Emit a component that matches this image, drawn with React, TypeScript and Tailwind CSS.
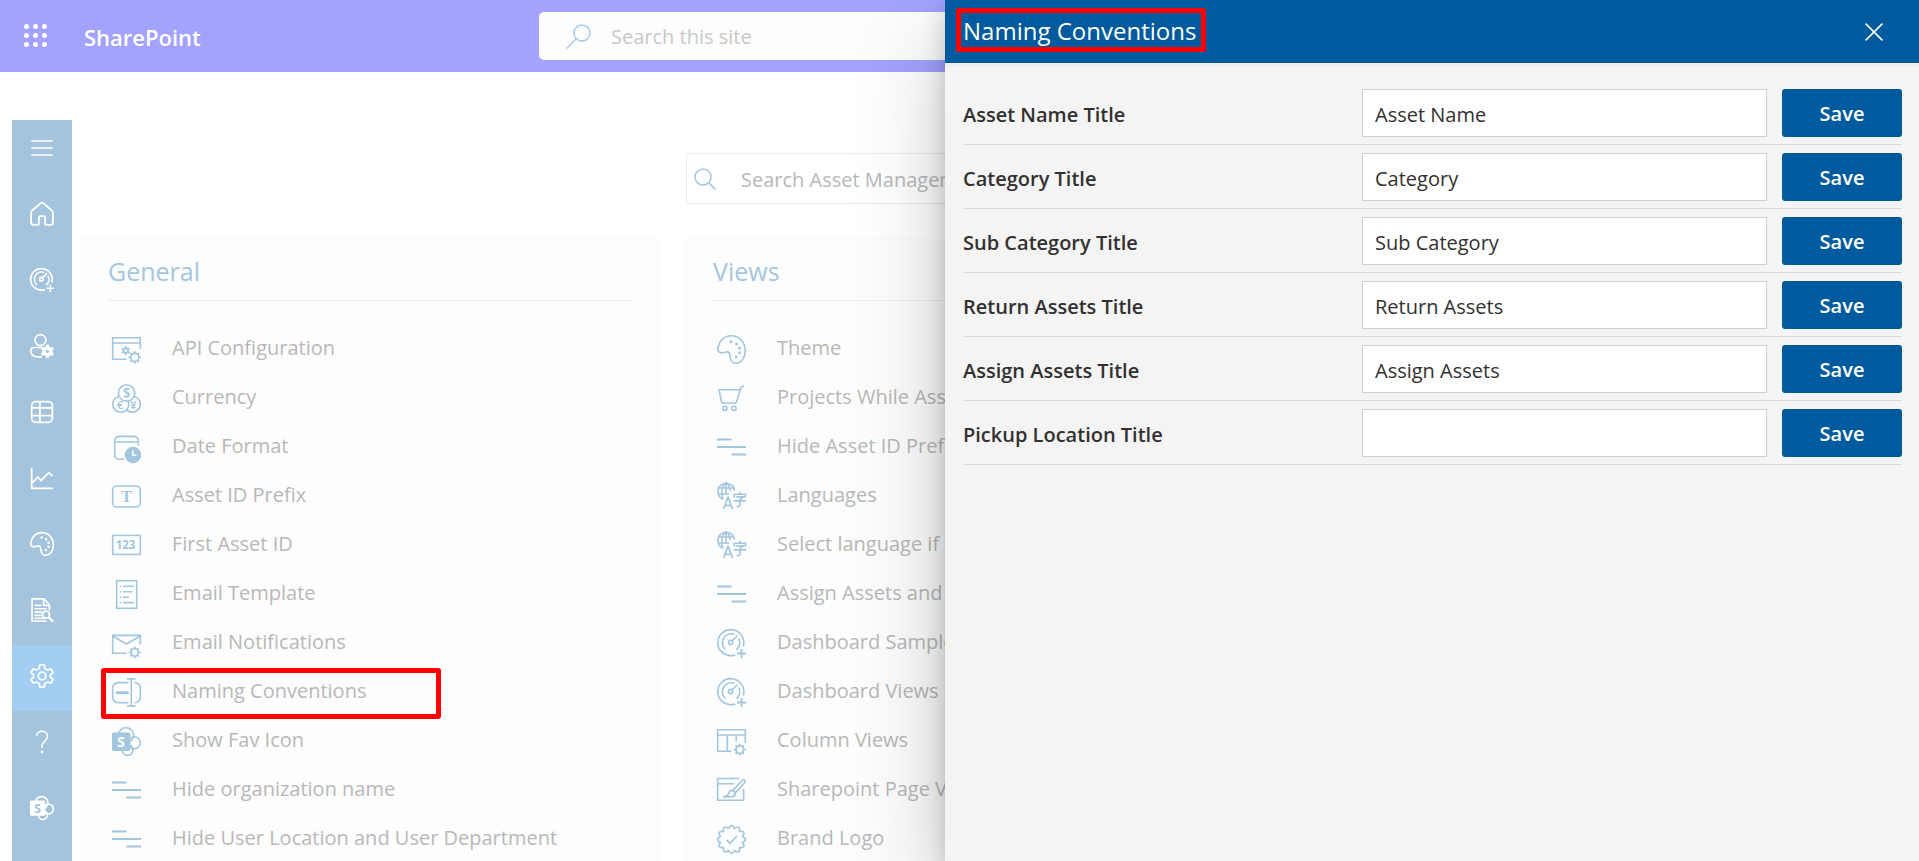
import React from "react";

type IconProps = { className?: string };

function Svg({ className = "", children }: { className?: string; children: React.ReactNode }) {
  return (
    <svg
      viewBox="0 0 29 29"
      fill="none"
      stroke="currentColor"
      strokeWidth="1.6"
      className={`shrink-0 overflow-visible ${className}`}
      aria-hidden="true"
    >
      {children}
    </svg>
  );
}

function Gear({ x, y, r, teeth = 8 }: { x: number; y: number; r: number; teeth?: number }) {
  return (
    <g transform={`translate(${x} ${y})`}>
      <circle r={r} />
      {Array.from({ length: teeth }, (_, i) => (
        <path key={i} d={`M0 ${-r}V${-r - 2.2}`} strokeWidth="1.9" transform={`rotate(${(360 / teeth) * i})`} />
      ))}
    </g>
  );
}

const ApiIcon = ({ className }: IconProps) => (
  <Svg className={className}>
    <path d="M14.5 24.3H.7V2.7H28.3V14M.7 8H28.3" />
    <Gear x={13.7} y={15.7} r={2.2} teeth={6} />
    <Gear x={22.7} y={22.4} r={4} />
  </Svg>
);

const CurrencyIcon = ({ className }: IconProps) => (
  <Svg className={className}>
    <circle cx="20.2" cy="20.2" r="8.1" fill="#fdfdfd" />
    <circle cx="8.8" cy="20.2" r="8.1" fill="#fdfdfd" />
    <circle cx="14.6" cy="8.9" r="8.2" fill="#fdfdfd" />
    <g fill="currentColor" stroke="none" fontFamily="Open Sans, sans-serif" fontWeight="600" textAnchor="middle">
      <text x="14.6" y="13.8" fontSize="13.5">$</text>
      <text x="8" y="24.6" fontSize="11.5">€</text>
      <text x="21.2" y="24.6" fontSize="11.5">¥</text>
    </g>
  </Svg>
);

const DateIcon = ({ className }: IconProps) => (
  <Svg className={className}>
    <path d="M12 26.3H7A4.3 4.3 0 0 1 2.7 22V7.7A4.3 4.3 0 0 1 7 3.4H22A4.3 4.3 0 0 1 26.3 7.7V12.5M2.7 9H26.3" />
    <circle cx="21" cy="22" r="8.2" fill="currentColor" stroke="none" />
    <path d="M20.8 17.5V22.3H24.5" stroke="#fdfdfd" strokeWidth="1.6" />
  </Svg>
);

const PrefixIcon = ({ className }: IconProps) => (
  <Svg className={className}>
    <rect x=".7" y="4" width="27.6" height="21" rx="4" />
    <text x="14.5" y="20.2" fontSize="16" fontWeight="700" fontFamily="Liberation Serif, serif" textAnchor="middle" fill="currentColor" stroke="none">T</text>
  </Svg>
);

const NumberIcon = ({ className }: IconProps) => (
  <Svg className={className}>
    <rect x=".7" y="4.4" width="27.6" height="19" />
    <text x="13.6" y="18.2" fontSize="11.5" fontWeight="700" fontFamily="Open Sans, sans-serif" textAnchor="middle" fill="currentColor" stroke="none">123</text>
  </Svg>
);

const TemplateIcon = ({ className }: IconProps) => (
  <Svg className={className}>
    <rect x="4.7" y=".7" width="20" height="27.6" />
    <path d="M7.8 6.3H9.2M11 6.3H22M7.8 11.8H9.2M11 11.8H20.3M7.8 17.2H9.2M11 17.2H17M7.8 22.6H9.2M11 22.6H22" />
  </Svg>
);

const MailIcon = ({ className }: IconProps) => (
  <Svg className={className}>
    <path d="M14.6 24.3H.7V6.4H28.3V15.5M.7 7L14.5 15L28.3 7" />
    <Gear x={22.7} y={23.4} r={3.6} />
  </Svg>
);

const RenameIcon = ({ className }: IconProps) => (
  <Svg className={className}>
    <path d="M16.5 4.6H6A5.3 5.3 0 0 0 .7 9.9V19.4A5.3 5.3 0 0 0 6 24.7H16.5M22.5 4.6A5.5 5.5 0 0 1 28.3 10V19.3A5.5 5.5 0 0 1 22.5 24.7" />
    <path d="M19.3 .9V28.1M15 .9H23.5M15 28.1H23.5" />
    <path d="M5 14.7H15.5" strokeWidth="3" strokeLinecap="round" />
  </Svg>
);

const SiteIcon = ({ className, ink }: IconProps & { ink: string }) => (
  <Svg className={className}>
    <circle cx="14" cy="8.3" r="7.6" />
    <circle cx="22.3" cy="15.8" r="6" />
    <circle cx="15.5" cy="23" r="5.4" />
    <rect x="0" y="5.5" width="18.3" height="18.5" rx="1.5" fill="currentColor" stroke="none" />
    <text x="9.1" y="20" fontSize="14.5" fontWeight="700" fontFamily="Open Sans, sans-serif" textAnchor="middle" fill={ink} stroke="none">S</text>
  </Svg>
);

const FavIcon = ({ className }: IconProps) => <SiteIcon className={className} ink="#fdfdfd" />;

const LinesIcon = ({ className }: IconProps) => (
  <Svg className={className}>
    <path d="M0 6.5H14.5M0 14H29M14.5 21.5H29" strokeWidth="1.8" />
  </Svg>
);

const PaletteIcon = ({ className }: IconProps) => (
  <Svg className={className}>
    <path d="M.8 14.2C1.6 6.2 7 .8 14.2 .8C22 .8 28.2 7 28.2 15.6C28.2 23.4 24 28.2 19.2 28.2C15.2 28.2 13.2 24.6 13.1 20.9C13 17.8 11.3 16.1 8.7 16.9C6.6 17.6 5.6 18.2 3.7 17.7C1.6 17.1 .6 15.8 .8 14.2Z" />
    <g fill="currentColor" stroke="none">
      <circle cx="14" cy="6.7" r="1.5" />
      <circle cx="19.4" cy="8.9" r="1.5" />
      <circle cx="22.5" cy="12.9" r="1.5" />
      <circle cx="22.5" cy="17.7" r="1.5" />
      <circle cx="19.1" cy="21.8" r="1.5" />
    </g>
  </Svg>
);

const CartIcon = ({ className }: IconProps) => (
  <Svg className={className}>
    <path d="M27 2.2H25.5Q24.4 2.2 24 3.6L19.6 17.8Q19.2 19 18 19H6Q4.8 19 4.5 17.8L2 5.7H23.4" />
    <circle cx="7.8" cy="24.3" r="2.1" />
    <circle cx="17" cy="24.3" r="2.1" />
  </Svg>
);

const LanguageIcon = ({ className }: IconProps) => (
  <Svg className={className}>
    <path d="M17.6 8.6A8.4 8.4 0 1 0 6 17.4" />
    <path d="M6 17C3.6 12 4.4 4 9 .9C11.8 2.6 13 5.5 13.1 9M9 1V12M1.3 6H16.8M1.3 12H12" />
    <path d="M6.6 27L10.8 15.4H11.2L15.6 27M8 23.4H14.2" strokeWidth="1.7" />
    <path d="M22.8 9.8V12.2M17.3 15.5V12.3H28.5V15.5M19.3 14.9H26.3L23 17.6V23.3Q23 24.6 21.3 24.6H19.8M16.8 18.9H29" strokeWidth="1.6" />
  </Svg>
);

const DashboardIcon = ({ className }: IconProps) => (
  <Svg className={className}>
    <path d="M18.2 25.9A13 13 0 1 1 26.2 17.5" />
    <path d="M8.4 20.6A9 9 0 0 1 17.5 5.4M21.8 9.6A9 9 0 0 1 19.5 20.6M15 12L20.5 6.5" />
    <circle cx="13.6" cy="13.5" r="2.1" />
    <path d="M24.5 20V29M20 24.5H29" strokeWidth="1.8" />
  </Svg>
);

const ColumnsIcon = ({ className }: IconProps) => (
  <Svg className={className}>
    <path d="M14.5 24.3H.7V2.7H28.3V16M.7 8H28.3M10.3 8V24.3M19.2 8V14.5" />
    <Gear x={22.8} y={22.6} r={3.7} />
  </Svg>
);

const PageIcon = ({ className }: IconProps) => (
  <Svg className={className}>
    <path d="M22.5 2.5H.7V24.3H26.6V13M.7 7.7H17" />
    <path d="M15.8 14.4L25.2 4.5Q26.6 3.2 27.8 4.3Q28.9 5.4 27.6 6.8L18.3 16.8Z" />
    <path d="M15.8 14.4L18.3 16.8Q18.6 20.4 14.9 20.8L6 20.9Q10.9 20.4 11.4 17.9Q12.3 14.2 15.8 14.4Z" />
  </Svg>
);

const BADGE_PATH = (() => {
  const points = Array.from({ length: 12 }, (_, i) => {
    const a = (Math.PI / 6) * i - Math.PI / 2 + Math.PI / 12;
    const b = a - Math.PI / 12;
    return {
      x: 14.5 + 11.4 * Math.cos(a),
      y: 14.5 + 11.4 * Math.sin(a),
      cx: 14.5 + 17.2 * Math.cos(b),
      cy: 14.5 + 17.2 * Math.sin(b),
    };
  });
  return (
    `M${points[11].x} ${points[11].y}` + points.map((p) => `Q${p.cx} ${p.cy} ${p.x} ${p.y}`).join("") + "Z"
  );
})();

const BadgeIcon = ({ className }: IconProps) => (
  <Svg className={className}>
    <path d={BADGE_PATH} strokeLinejoin="round" />
    <path d="M9.3 14.7L13 18.4L20 11" />
  </Svg>
);

const HomeIcon = ({ className }: IconProps) => (
  <Svg className={className}>
    <path
      d="M1.3 13Q1.3 11.6 2.3 10.6L12.8 1.5Q14.5 .2 16.2 1.5L26.7 10.6Q27.7 11.6 27.7 13V24.5Q27.7 27.7 24.5 27.7H20.3Q18.3 27.7 18.3 25.7V18.6Q18.3 17 16.7 17H12.3Q10.7 17 10.7 18.6V25.7Q10.7 27.7 8.7 27.7H4.5Q1.3 27.7 1.3 24.5Z"
      strokeWidth="2.2"
    />
  </Svg>
);

const UserIcon = ({ className }: IconProps) => (
  <Svg className={className}>
    <circle cx="12.6" cy="7.4" r="6.6" strokeWidth="2" />
    <path d="M14.5 28H12C5 28 .9 25.5 .9 20.5Q.9 16.3 4.5 16.3H14.5" strokeWidth="2" />
    <circle cx="21" cy="21" r="4.2" strokeWidth="4.4" />
    {[0, 60, 120, 180, 240, 300].map((a) => (
      <path key={a} d="M21 15.5V12.8" strokeWidth="3.4" transform={`rotate(${a} 21 21)`} />
    ))}
  </Svg>
);

const TableIcon = ({ className }: IconProps) => (
  <Svg className={className}>
    <rect x="2" y="2" width="25" height="25" rx="5" strokeWidth="2.1" />
    <path d="M2 9.5H27M2 19H27M12 2V27" strokeWidth="2.1" />
  </Svg>
);

const ChartIcon = ({ className }: IconProps) => (
  <Svg className={className}>
    <path d="M2 2V27H27.5M2.5 20.5L9.3 13.5L13.3 17.5L22.8 8L27.3 12.3" strokeWidth="2.1" />
  </Svg>
);

const DocSearchIcon = ({ className }: IconProps) => (
  <Svg className={className}>
    <path d="M23.5 15V8.5L17 1H2.5V28H20M16.5 1V9H23.5" strokeWidth="2" />
    <path d="M5.5 9H14M5.5 13H20M5.5 17H15M5.5 21H14M5.5 24.5H17" strokeWidth="2" />
    <circle cx="19.3" cy="20" r="4.2" strokeWidth="2.2" />
    <path d="M22.3 23.2L28 28.5" strokeWidth="2.8" />
  </Svg>
);

const SettingsIcon = ({ className }: IconProps) => (
  <Svg className={className}>
    <circle cx="14.5" cy="14.5" r="4.6" strokeWidth="2.1" />
    <path
      d="M11.9 1.2H17.1L18 5.5L20.9 7.2L25.2 5.9L27.8 10.3L24.6 13.2V15.8L27.8 18.7L25.2 23.1L20.9 21.8L18 23.5L17.1 27.8H11.9L11 23.5L8.1 21.8L3.8 23.1L1.2 18.7L4.4 15.8V13.2L1.2 10.3L3.8 5.9L8.1 7.2L11 5.5Z"
      strokeWidth="2.1"
      strokeLinejoin="round"
    />
  </Svg>
);

const HelpIcon = ({ className }: IconProps) => (
  <Svg className={className}>
    <path d="M8 7.5Q8.5 1.5 14.5 1.5Q21 1.5 21 7.8Q21 11 17.5 14Q14.5 16.5 14.5 19V21.5" strokeWidth="1.9" />
    <circle cx="14.5" cy="26.5" r="1.6" fill="currentColor" stroke="none" />
  </Svg>
);

const SiteNavIcon = ({ className }: IconProps) => <SiteIcon className={className} ink="#a4c3dd" />;

const MenuIcon = ({ className }: IconProps) => (
  <Svg className={className}>
    <path d="M1.5 6H27.5M1.5 14.5H27.5M1.5 23H27.5" strokeWidth="1.9" />
  </Svg>
);

type IconType = (props: IconProps) => React.ReactElement;

const navItems: { label: string; Icon: IconType; active?: boolean }[] = [
  { label: "Home", Icon: HomeIcon },
  { label: "Dashboard", Icon: DashboardIcon },
  { label: "Users", Icon: UserIcon },
  { label: "Assets", Icon: TableIcon },
  { label: "Reports", Icon: ChartIcon },
  { label: "Theme", Icon: PaletteIcon },
  { label: "Audit", Icon: DocSearchIcon },
  { label: "Settings", Icon: SettingsIcon, active: true },
  { label: "Help", Icon: HelpIcon },
  { label: "Site", Icon: SiteNavIcon },
];

type Item = { label: string; Icon: IconType; highlighted?: boolean };

const generalItems: Item[] = [
  { label: "API Configuration", Icon: ApiIcon },
  { label: "Currency", Icon: CurrencyIcon },
  { label: "Date Format", Icon: DateIcon },
  { label: "Asset ID Prefix", Icon: PrefixIcon },
  { label: "First Asset ID", Icon: NumberIcon },
  { label: "Email Template", Icon: TemplateIcon },
  { label: "Email Notifications", Icon: MailIcon },
  { label: "Naming Conventions", Icon: RenameIcon, highlighted: true },
  { label: "Show Fav Icon", Icon: FavIcon },
  { label: "Hide organization name", Icon: LinesIcon },
  { label: "Hide User Location and User Department", Icon: LinesIcon },
];

const viewItems: Item[] = [
  { label: "Theme", Icon: PaletteIcon },
  { label: "Projects While Assigning", Icon: CartIcon },
  { label: "Hide Asset ID Prefix", Icon: LinesIcon },
  { label: "Languages", Icon: LanguageIcon },
  { label: "Select language if", Icon: LanguageIcon },
  { label: "Assign Assets and", Icon: LinesIcon },
  { label: "Dashboard Samples", Icon: DashboardIcon },
  { label: "Dashboard Views", Icon: DashboardIcon },
  { label: "Column Views", Icon: ColumnsIcon },
  { label: "Sharepoint Page View", Icon: PageIcon },
  { label: "Brand Logo", Icon: BadgeIcon },
];

const fields = [
  { id: "asset-name", label: "Asset Name Title", value: "Asset Name" },
  { id: "category", label: "Category Title", value: "Category" },
  { id: "sub-category", label: "Sub Category Title", value: "Sub Category" },
  { id: "return-assets", label: "Return Assets Title", value: "Return Assets" },
  { id: "assign-assets", label: "Assign Assets Title", value: "Assign Assets" },
  { id: "pickup-location", label: "Pickup Location Title", value: "" },
];

function SettingsCard({ title, items }: { title: string; items: Item[] }) {
  return (
    <section className="min-w-0 bg-[#fdfdfd] px-[30px] pt-[17px]">
      <h2 className="border-b border-[#eeeeee] pb-[11px] text-[25px] leading-[35px] text-[#a3c6df]">{title}</h2>
      <ul className="pt-[22px]">
        {items.map(({ label, Icon, highlighted }) => (
          <li key={label} className="relative">
            <a href="#" className="flex h-[49px] items-center pl-1 whitespace-nowrap text-[#b8b8b8]">
              <Icon className="mt-1 size-[29px] text-[#a3c6df]" />
              <span className="ml-[31px] text-[20px] leading-7">{label}</span>
            </a>
            {highlighted && (
              <span className="pointer-events-none absolute -left-[7px] top-0.5 h-[51px] w-[340px] rounded-[3px] border-[5px] border-[#ff0000]" />
            )}
          </li>
        ))}
      </ul>
    </section>
  );
}

export default function App() {
  return (
    <div className="relative flex h-screen flex-col overflow-hidden bg-white font-['Open_Sans','Noto_Sans',sans-serif]">
      <header className="flex h-[72px] shrink-0 items-center bg-[#a3a3ff]">
        <button type="button" aria-label="App launcher" className="mb-0.5 ml-6 text-white">
          <svg viewBox="0 0 23 23" className="size-[23px]" fill="currentColor" aria-hidden="true">
            {[2.5, 11.5, 20.5].flatMap((cy) =>
              [2.5, 11.5, 20.5].map((cx) => <circle key={`${cx}-${cy}`} cx={cx} cy={cy} r="2.5" />),
            )}
          </svg>
        </button>
        <a href="#" className="ml-[37px] w-[455px] pt-0.5 text-[22px] font-semibold leading-8 text-white">SharePoint</a>
        <label className="flex h-12 w-[842px] items-center rounded-[5px] bg-[#fdfdfd] pl-[27px]">
          <svg viewBox="0 0 25 25" className="size-[25px] text-[#a6c9e8]" fill="none" stroke="currentColor" strokeWidth="1.4" aria-hidden="true">
            <circle cx="16" cy="9" r="8" />
            <path d="M10.4 14.6L.6 24.4" />
          </svg>
          <input aria-label="Search this site" placeholder="Search this site" className="ml-5 flex-1 bg-transparent pt-0.5 text-[20px] outline-none placeholder:text-[#c8c8c8]" />
        </label>
      </header>

      <div className="flex min-h-0 flex-1 gap-1.5 pl-3">
        <nav aria-label="Main" className="mt-12 flex w-[60px] shrink-0 flex-col bg-[#a4c3dd] text-white">
          <button type="button" aria-label="Expand menu" className="mb-[7px] flex h-14 shrink-0 items-center justify-center">
            <MenuIcon className="size-6" />
          </button>
          {navItems.map(({ label, Icon, active }) => (
            <a
              key={label}
              href="#"
              aria-label={label}
              className={`flex h-[66px] shrink-0 items-center justify-center pb-[5px] ${active ? "rounded-[3px] bg-[#a3cef1]" : ""}`}
            >
              <Icon className="size-6 [stroke-width:2]" />
            </a>
          ))}
        </nav>

        <main className="flex min-w-0 flex-1 flex-col pr-[49px]">
          <label className="mt-[81px] ml-[608px] flex h-[51px] w-[576px] shrink-0 items-center rounded-[3px] border border-[#ebebeb] bg-white pl-[7px]">
            <svg viewBox="0 0 22 22" className="size-[22px] text-[#a3c6df]" fill="none" stroke="currentColor" strokeWidth="1.5" aria-hidden="true">
              <circle cx="9" cy="9" r="8" />
              <path d="M14.6 14.6L21.4 21.4" />
            </svg>
            <input aria-label="Search Asset Management" placeholder="Search Asset Management" className="ml-[25px] flex-1 bg-transparent pt-0.5 text-[20px] outline-none placeholder:text-[#b8b8b8]" />
          </label>
          <div className="mt-[33px] grid shrink-0 grid-cols-3 gap-[23px]">
            <SettingsCard title="General" items={generalItems} />
            <SettingsCard title="Views" items={viewItems} />
          </div>
        </main>
      </div>

      <aside
        aria-label="Naming Conventions"
        className="absolute inset-y-0 right-0 w-[974px] max-w-full bg-[#f4f4f4] shadow-[0_38px_86px_rgba(0,0,0,0.22),0_7px_22px_rgba(0,0,0,0.18)]"
      >
        <div className="flex h-[66px] items-center justify-between border-b-[3px] border-[#efefef] bg-[#005a9e] bg-clip-padding pr-9 pl-[18px] text-white">
          <h1 className="relative pb-0.5 text-[24px] leading-8">
            Naming Conventions
            <span className="pointer-events-none absolute -top-[7px] -right-[10px] -bottom-[3px] -left-[7px] rounded-[3px] border-[5px] border-[#ff0000]" />
          </h1>
          <button type="button" aria-label="Close">
            <svg viewBox="0 0 18 18" className="size-[18px]" fill="none" stroke="currentColor" strokeWidth="1.6" aria-hidden="true">
              <path d="M.6 .6L17.4 17.4M17.4 .6L.6 17.4" />
            </svg>
          </button>
        </div>
        <form className="pt-[15px] pr-[17px] pl-[18px]" onSubmit={(e) => e.preventDefault()}>
          {fields.map((f) => (
            <div
              key={f.id}
              className="grid grid-cols-[minmax(0,1fr)_405px_120px] items-center gap-x-[15px] border-b border-[#dcdcdc] pt-2 pb-[7px] text-[20px] text-[#323130]"
            >
              <label htmlFor={f.id} className="pt-1 font-semibold">{f.label}</label>
              <input id={f.id} defaultValue={f.value} className="h-12 border border-[#d0d0d0] bg-white px-3 pt-0.5 outline-none" />
              <button type="submit" className="h-12 rounded-[3px] bg-[#005a9e] pt-0.5 font-semibold text-white">Save</button>
            </div>
          ))}
        </form>
      </aside>
    </div>
  );
}
